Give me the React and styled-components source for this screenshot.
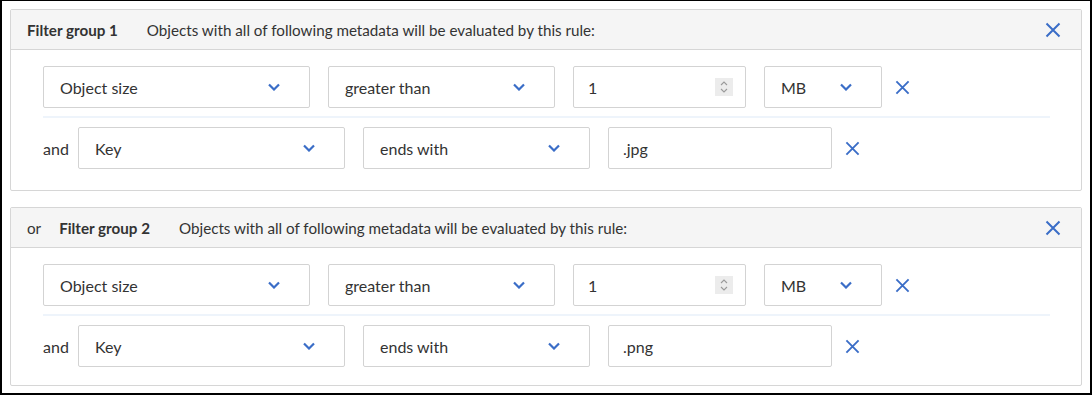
import React from "react";
import styled, { createGlobalStyle } from "styled-components";

const GlobalStyle = createGlobalStyle`
  html, body {
    margin: 0;
    padding: 0;
    background: #fff;
  }
  body {
    font-family: Lato, "Open Sans", sans-serif;
    color: #333;
  }
`;

const Frame = styled.div`
  box-sizing: border-box;
  width: 1092px;
  height: 395px;
  border: 2px solid #000;
  border-top-width: 1px;
  padding: 8px 8px 0 8px;
  display: flex;
  flex-direction: column;
  gap: 16px;
`;

const Group = styled.section`
  border: 1px solid #d6d6d6;
  border-radius: 2px;
  background: #fff;
`;

const GroupHeader = styled.div`
  height: 40px;
  box-sizing: border-box;
  display: flex;
  align-items: center;
  padding: 0 18px 0 16px;
  background: #f5f5f5;
  border-bottom: 1px solid #d6d6d6;
  font-size: 15.2px;
`;

const OrLabel = styled.span`
  margin-right: 18px;
`;

const GroupTitle = styled.span`
  font-weight: 700;
  margin-right: 29px;
`;

const GroupDesc = styled.span`
  flex: 1;
`;

const IconButton = styled.button`
  border: 0;
  background: none;
  padding: 0;
  width: 20px;
  height: 20px;
  display: flex;
  align-items: center;
  justify-content: center;
  cursor: pointer;
  color: #3a6dc7;
`;

const GroupBody = styled.div`
  padding: 16px 32px ${(p) => (p.$compact ? 18 : 21)}px 32px;
`;

const Rows = styled.div`
  width: 1007px;
`;

const Row = styled.div`
  display: flex;
  align-items: center;
  gap: 18px;
  padding: ${(p) => (p.$first ? "0 0 8px 0" : "9px 0 0 0")};
  border-top: ${(p) => (p.$first ? "none" : "2px solid #eef4fb")};
`;

const AndLabel = styled.span`
  width: 25px;
  margin-right: -8px;
  font-size: 16px;
`;

const Select = styled.div`
  box-sizing: border-box;
  width: ${(p) => p.$w}px;
  height: 42px;
  border: 1px solid #d3d3d3;
  border-radius: 2px;
  display: flex;
  align-items: center;
  justify-content: space-between;
  padding: 0 29px 0 16px;
  font-size: 16px;
  color: #333;
`;

const TextInput = styled.div`
  box-sizing: border-box;
  width: ${(p) => p.$w}px;
  height: 42px;
  border: 1px solid #d3d3d3;
  border-radius: 2px;
  display: flex;
  align-items: center;
  justify-content: space-between;
  padding: 0 12px 0 14px;
  font-size: 16px;
  color: #333;
`;

const Spinner = styled.div`
  width: 18px;
  height: 18px;
  background: #ececec;
  display: flex;
  align-items: center;
  justify-content: center;
`;

const RemoveSlot = styled.div`
  margin-left: -8px;
`;

const Chevron = () => (
  <svg width="12" height="8" viewBox="0 0 12 8">
    <path d="M1 1.5 L6 6.5 L11 1.5" fill="none" stroke="#3a6dc7" strokeWidth="2.2" />
  </svg>
);

const Cross = ({ size = 15 }) => (
  <svg width={size} height={size} viewBox="0 0 16 16">
    <path d="M1.5 1.5 L14.5 14.5 M14.5 1.5 L1.5 14.5" fill="none" stroke="currentColor" strokeWidth="2" />
  </svg>
);

const SpinIcon = () => (
  <svg width="10" height="14" viewBox="0 0 10 14">
    <path d="M2 5 L5 2 L8 5 M2 9 L5 12 L8 9" fill="none" stroke="#9a9a9a" strokeWidth="1.1" />
  </svg>
);

const Remove = () => (
  <RemoveSlot>
    <IconButton aria-label="remove">
      <Cross />
    </IconButton>
  </RemoveSlot>
);

const FilterGroup = ({ index, ext }) => (
  <Group>
    <GroupHeader>
      {index > 1 && <OrLabel>or</OrLabel>}
      <GroupTitle>Filter group {index}</GroupTitle>
      <GroupDesc>Objects with all of following metadata will be evaluated by this rule:</GroupDesc>
      <IconButton aria-label="remove group">
        <Cross size={16} />
      </IconButton>
    </GroupHeader>
    <GroupBody $compact={index > 1}>
      <Rows>
        <Row $first>
          <Select $w={267}>
            Object size
            <Chevron />
          </Select>
          <Select $w={227}>
            greater than
            <Chevron />
          </Select>
          <TextInput $w={173}>
            1
            <Spinner>
              <SpinIcon />
            </Spinner>
          </TextInput>
          <Select $w={118}>
            MB
            <Chevron />
          </Select>
          <Remove />
        </Row>
        <Row>
          <AndLabel>and</AndLabel>
          <Select $w={267}>
            Key
            <Chevron />
          </Select>
          <Select $w={227}>
            ends with
            <Chevron />
          </Select>
          <TextInput $w={224}>{ext}</TextInput>
          <Remove />
        </Row>
      </Rows>
    </GroupBody>
  </Group>
);

export default function App() {
  return (
    <>
      <GlobalStyle />
      <Frame>
        <FilterGroup index={1} ext=".jpg" />
        <FilterGroup index={2} ext=".png" />
      </Frame>
    </>
  );
}
